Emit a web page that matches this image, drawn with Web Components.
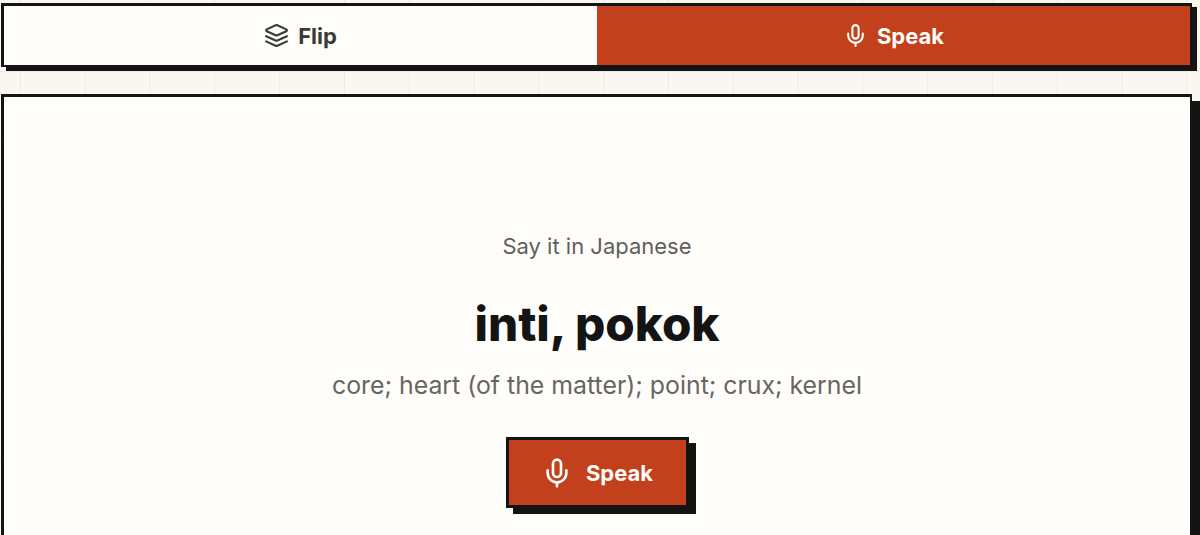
<!DOCTYPE html>
<html>
<head>
<meta charset="utf-8">
<style>
html, body { margin: 0; height: 100%; overflow: hidden; }
body {
    background-color: #faf7f0;
    background-image: linear-gradient(90deg, #efebe2 1px, transparent 1px), linear-gradient(#efebe2 1px, transparent 1px);
    background-size: 64.8px 64.8px;
    background-position: 20px 6px;
    font-family: "Inter", "Liberation Sans", sans-serif;
}
</style>
</head>
<body>
<template id="icon-mic">
    <svg viewBox="0 0 24 24" fill="none" stroke="currentColor" stroke-width="2" stroke-linecap="round" stroke-linejoin="round">
        <path d="M12 2a3 3 0 0 0-3 3v7a3 3 0 0 0 6 0V5a3 3 0 0 0-3-3Z"/>
        <path d="M19 10v2a7 7 0 0 1-14 0v-2"/>
        <line x1="12" y1="19" x2="12" y2="22"/>
    </svg>
</template>
<template id="icon-layers">
    <svg viewBox="0 0 24 24" fill="none" stroke="currentColor" stroke-width="2" stroke-linecap="round" stroke-linejoin="round">
        <path d="m12.83 2.18a2 2 0 0 0-1.66 0L2.6 6.08a1 1 0 0 0 0 1.83l8.58 3.91a2 2 0 0 0 1.66 0l8.58-3.9a1 1 0 0 0 0-1.83Z"/>
        <path d="m22 17.65-9.17 4.16a2 2 0 0 1-1.66 0L2 17.65"/>
        <path d="m22 12.65-9.17 4.16a2 2 0 0 1-1.66 0L2 12.65"/>
    </svg>
</template>

<deck-page>
    <mode-tabs>
        <mode-tab icon="layers">Flip</mode-tab>
        <mode-tab icon="mic" active>Speak</mode-tab>
    </mode-tabs>
    <speak-card>
        <span slot="prompt">Say it in Japanese</span>
        <span slot="word">inti, pokok</span>
        <span slot="meaning">core; heart (of the matter); point; crux; kernel</span>
        <speak-button>Speak</speak-button>
    </speak-card>
</deck-page>

<script>
class DeckPage extends HTMLElement
{
    constructor()
    {
        super();
        const Shadow = this.attachShadow({mode: "open"});
        Shadow.innerHTML = `
        <style>
            :host {
                display: flex;
                flex-direction: column;
                gap: 27px;
                box-sizing: border-box;
                height: 535px;
                overflow: hidden;
                padding: 3px 8px 0 1px;
            }
        </style>
        <slot></slot>
        `;
    }
}

class ModeTabs extends HTMLElement
{
    constructor()
    {
        super();
        const Shadow = this.attachShadow({mode: "open"});
        Shadow.innerHTML = `
        <style>
            :host {
                display: grid;
                grid-template-columns: 1fr 1fr;
                flex: none;
                box-sizing: border-box;
                height: 64px;
                border: solid #141414;
                border-width: 3px 2px 2px 3px;
                box-shadow: 5px 4px 0 #141414;
                background: #fffdf9;
            }
        </style>
        <slot></slot>
        `;
    }
}

class ModeTab extends HTMLElement
{
    constructor()
    {
        super();
        const Shadow = this.attachShadow({mode: "open"});
        Shadow.innerHTML = `
        <style>
            :host {
                display: flex;
                align-items: center;
                justify-content: center;
                gap: 9px;
                color: #3a3a38;
                font: 700 22px "Inter", "Liberation Sans", sans-serif;
            }
            :host([active]) {
                background: #c2401b;
                color: #fffdf9;
            }
            #icon { display: flex; }
            svg { width: 25px; height: 25px; }
        </style>
        <span id="icon"></span>
        <slot></slot>
        `;
        const Icon = document.getElementById("icon-" + this.getAttribute("icon")).content.cloneNode(true);
        Shadow.getElementById("icon").appendChild(Icon);
    }
}

class SpeakButton extends HTMLElement
{
    constructor()
    {
        super();
        const Shadow = this.attachShadow({mode: "open"});
        Shadow.innerHTML = `
        <style>
            :host {
                display: flex;
                align-items: center;
                justify-content: center;
                gap: 13px;
                box-sizing: border-box;
                width: 183px;
                height: 71px;
                border: 3px solid #141414;
                box-shadow: 7px 6px 0 #141414;
                background: #c2401b;
                color: #fffdf9;
                font: 700 22px "Inter", "Liberation Sans", sans-serif;
            }
            svg { width: 32px; height: 32px; display: block; }
        </style>
        <span id="icon"></span>
        <slot></slot>
        `;
        Shadow.getElementById("icon").appendChild(document.getElementById("icon-mic").content.cloneNode(true));
    }
}

class SpeakCard extends HTMLElement
{
    constructor()
    {
        super();
        const Shadow = this.attachShadow({mode: "open"});
        Shadow.innerHTML = `
        <style>
            :host {
                display: flex;
                flex-direction: column;
                align-items: center;
                flex: none;
                height: 600px;
                padding-top: 133px;
                border: solid #141414;
                border-width: 3px 2px 3px 3px;
                box-shadow: 8px 7px 0 #141414;
                background: #fffdf9;
            }
            .Prompt { font-size: 22px; line-height: 32px; color: #5f5f5c; }
            .Word { margin-top: 32px; font-size: 47.6px; line-height: 60px; font-weight: 800; color: #141414; }
            .Meaning { margin-top: 13px; font-size: 24.85px; line-height: 36px; color: #666663; }
            .Action { margin-top: 34px; }
        </style>
        <div class="Prompt"><slot name="prompt"></slot></div>
        <div class="Word"><slot name="word"></slot></div>
        <div class="Meaning"><slot name="meaning"></slot></div>
        <div class="Action"><slot></slot></div>
        `;
    }
}

customElements.define("deck-page", DeckPage);
customElements.define("mode-tabs", ModeTabs);
customElements.define("mode-tab", ModeTab);
customElements.define("speak-button", SpeakButton);
customElements.define("speak-card", SpeakCard);
</script>
</body>
</html>
